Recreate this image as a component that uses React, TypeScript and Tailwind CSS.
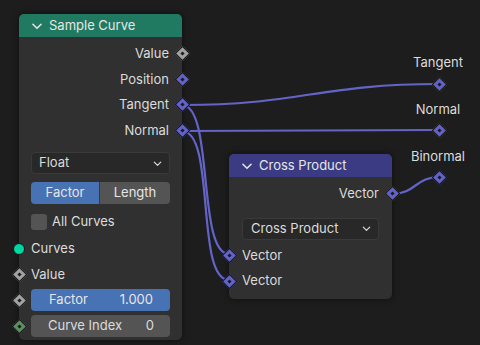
import React from "react";

const FONT = "font-['Inter','Noto_Sans',sans-serif]";

function Diamond({ color = "#6363c7", className = "" }: { color?: string; className?: string }) {
  return (
    <div className={`absolute w-[14px] h-[14px] flex items-center justify-center ${className}`}>
      <div
        className="w-[11px] h-[11px] shrink-0 rotate-45 border border-[#161616] flex items-center justify-center"
        style={{ backgroundColor: color }}
      >
        <div className="w-[3px] h-[3px] bg-[#1a1a1a]" />
      </div>
    </div>
  );
}

function Chevron({ size = 12, className = "" }: { size?: number; className?: string }) {
  return (
    <svg width={size} height={size} viewBox="0 0 12 12" className={className}>
      <path d="M2.5 4.5 L6 8 L9.5 4.5" fill="none" stroke="currentColor" strokeWidth="1.3" strokeLinecap="round" strokeLinejoin="round" />
    </svg>
  );
}

function OutRow({ label, color }: { label: string; color?: string }) {
  return (
    <div className="relative h-[25.5px] flex items-center justify-end pr-[13px] text-[13px] text-[#dcdcdc]">
      {label}
      <Diamond color={color} className="right-[-7px] top-1/2 -translate-y-1/2" />
    </div>
  );
}

export default function App() {
  return (
    <div className={`relative w-[480px] h-[345px] bg-[#1d1d1d] overflow-hidden ${FONT}`}>
      {/* wires */}
      <svg className="absolute inset-0" width="480" height="345">
        <g fill="none" stroke="#6464c8" strokeWidth="2.2" strokeLinecap="round">
          <path d="M182 105 C 300 105, 320 84, 439 84" />
          <path d="M182 131 C 300 131, 320 130, 439 130" />
          <path d="M182 105 C 214 105, 197 254, 229 254" />
          <path d="M182 131 C 216 131, 195 280, 229 280" />
          <path d="M392 194 C 416 194, 415 177, 439 177" />
        </g>
      </svg>

      {/* Sample Curve node */}
      <div className="absolute left-[19px] top-[14px] w-[163px] h-[326px] rounded-[5px] bg-[#303030] shadow-[0_0_6px_rgba(0,0,0,0.55)] flex flex-col">
        <div className="h-[23px] bg-[#1f7a61] rounded-t-[5px] flex items-center pl-[11px] gap-[5px] text-[13px] text-[#e6e6e6]">
          <Chevron size={14} className="text-[#e6e6e6]" />
          <span>Sample Curve</span>
        </div>
        <div className="pt-[4px]">
          <OutRow label="Value" color="#a1a1a1" />
          <OutRow label="Position" />
          <OutRow label="Tangent" />
          <OutRow label="Normal" />
        </div>
        <div className="mx-[12px] mt-[9px] h-[22px] rounded-[4px] bg-[#282828] border border-[#3a3a3a] flex items-center justify-between pl-[7px] pr-[6px] text-[13px] text-[#dcdcdc]">
          <span>Float</span>
          <Chevron size={11} className="text-[#dcdcdc]" />
        </div>
        <div className="mx-[12px] mt-[8px] h-[22px] rounded-[4px] flex overflow-hidden text-[13px] text-[#e6e6e6]">
          <div className="w-[68px] bg-[#4772b3] flex items-center justify-center">Factor</div>
          <div className="flex-1 bg-[#545454] flex items-center justify-center border-l border-[#3a3a3a]">Length</div>
        </div>
        <div className="mx-[12px] mt-[8px] h-[20px] flex items-center gap-[5px] text-[13px] text-[#dcdcdc]">
          <div className="w-[16px] h-[16px] rounded-[3px] bg-[#545454]" />
          <span>All Curves</span>
        </div>
        <div className="relative mt-[4px] h-[25.5px] flex items-center pl-[12px] text-[13px] text-[#dcdcdc]">
          <div className="absolute left-[-6px] top-1/2 -translate-y-1/2 w-[12px] h-[12px] rounded-full bg-[#00d6a3] border border-[#141414]" />
          Curves
        </div>
        <div className="relative h-[25.5px] flex items-center pl-[12px] text-[13px] text-[#dcdcdc]">
          <Diamond color="#a1a1a1" className="left-[-7px] top-1/2 -translate-y-1/2" />
          Value
        </div>
        <div className="relative mx-[12px] mt-[2px] h-[22px] rounded-[4px] bg-[#4772b3] flex items-center justify-between pl-[18px] pr-[17px] text-[13px] text-[#e6e6e6]">
          <Diamond color="#a1a1a1" className="left-[-19px] top-1/2 -translate-y-1/2" />
          <span>Factor</span>
          <span>1.000</span>
        </div>
        <div className="relative mx-[12px] mt-[4px] h-[22px] rounded-[4px] bg-[#545454] flex items-center justify-between pl-[17px] pr-[16px] text-[13px] text-[#dcdcdc]">
          <Diamond color="#5a8f62" className="left-[-19px] top-1/2 -translate-y-1/2" />
          <span>Curve Index</span>
          <span>0</span>
        </div>
      </div>

      {/* Cross Product node */}
      <div className="absolute left-[229px] top-[154px] w-[163px] h-[145px] rounded-[5px] bg-[#303030] shadow-[0_0_6px_rgba(0,0,0,0.55)] flex flex-col">
        <div className="h-[23px] bg-[#3b3b84] rounded-t-[5px] flex items-center pl-[11px] gap-[5px] text-[13px] text-[#e6e6e6]">
          <Chevron size={14} className="text-[#e6e6e6]" />
          <span>Cross Product</span>
        </div>
        <div className="pt-[4px]">
          <OutRow label="Vector" />
        </div>
        <div className="mx-[13px] mt-[11px] h-[22px] rounded-[4px] bg-[#282828] border border-[#3a3a3a] flex items-center justify-between pl-[8px] pr-[6px] text-[13px] text-[#dcdcdc]">
          <span>Cross Product</span>
          <Chevron size={11} className="text-[#dcdcdc]" />
        </div>
        <div className="relative mt-[3px] h-[25.5px] flex items-center pl-[13px] text-[13px] text-[#dcdcdc]">
          <Diamond className="left-[-7px] top-1/2 -translate-y-1/2" />
          Vector
        </div>
        <div className="relative h-[26px] flex items-center pl-[13px] text-[13px] text-[#dcdcdc]">
          <Diamond className="left-[-7px] top-1/2 -translate-y-1/2" />
          Vector
        </div>
      </div>

      {/* Reroutes */}
      {[
        { label: "Tangent", y: 84, ly: 62 },
        { label: "Normal", y: 130, ly: 109 },
        { label: "Binormal", y: 177, ly: 156 },
      ].map((r) => (
        <React.Fragment key={r.label}>
          <div
            className="absolute w-[80px] text-center text-[13px] text-[#dcdcdc] leading-none -translate-y-1/2"
            style={{ left: 398, top: r.ly }}
          >
            {r.label}
          </div>
          <div className="absolute" style={{ left: 439, top: r.y }}>
            <Diamond className="-translate-x-1/2 -translate-y-1/2" />
          </div>
        </React.Fragment>
      ))}
    </div>
  );
}
